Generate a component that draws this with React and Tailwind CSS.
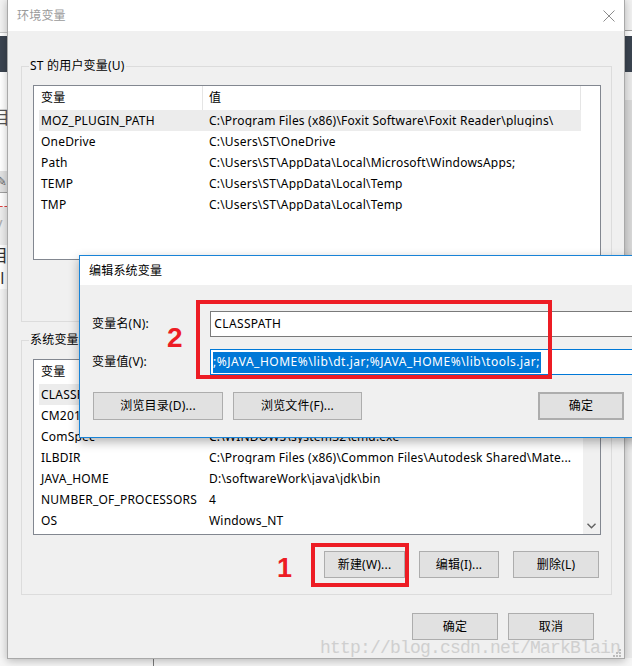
import React from "react";

const userVars = [
  ["MOZ_PLUGIN_PATH", "C:\\Program Files (x86)\\Foxit Software\\Foxit Reader\\plugins\\"],
  ["OneDrive", "C:\\Users\\ST\\OneDrive"],
  ["Path", "C:\\Users\\ST\\AppData\\Local\\Microsoft\\WindowsApps;"],
  ["TEMP", "C:\\Users\\ST\\AppData\\Local\\Temp"],
  ["TMP", "C:\\Users\\ST\\AppData\\Local\\Temp"],
];

const sysVars = [
  ["CLASSPATH", ".;%JAVA_HOME%\\lib\\dt.jar;%JAVA_HOME%\\lib\\tools.jar;"],
  ["CM2018DIR", "C:\\Program Files\\Common Files\\"],
  ["ComSpec", "C:\\WINDOWS\\system32\\cmd.exe"],
  ["ILBDIR", "C:\\Program Files (x86)\\Common Files\\Autodesk Shared\\Mate..."],
  ["JAVA_HOME", "D:\\softwareWork\\java\\jdk\\bin"],
  ["NUMBER_OF_PROCESSORS", "4"],
  ["OS", "Windows_NT"],
];

function Btn({ children, className = "" }) {
  return (
    <div
      className={
        "flex items-center justify-center h-[27px] bg-[#e1e1e1] border border-[#adadad] whitespace-nowrap " +
        className
      }
    >
      {children}
    </div>
  );
}

function ListView({ rows, className = "", scroll = false }) {
  return (
    <div className={"flex border border-[#828790] bg-white overflow-hidden " + className}>
      <div className="w-[547px] flex flex-col">
        <div className="flex h-[24px] shrink-0">
          <div className="w-[169px] pl-[7px] flex items-center border-r border-[#e5e5e5]">变量</div>
          <div className="flex-1 pl-[6px] flex items-center border-r border-[#e5e5e5]">值</div>
        </div>
        <div className="flex flex-col pl-[5px]">
          {rows.map(([k, v], i) => (
            <div
              key={k}
              className={
                "flex h-[21px] items-center whitespace-nowrap " + (i === 0 ? "bg-[#ececec]" : "")
              }
            >
              <div className="w-[168px] pl-[2px] overflow-hidden">{k}</div>
              <div className="flex-1 pl-[2px] overflow-hidden">{v}</div>
            </div>
          ))}
        </div>
      </div>
      {scroll ? (
        <div className="ml-auto w-[17px] bg-[#f0f0f0] flex flex-col justify-end items-center pb-[5px]">
          <svg width="9" height="6" viewBox="0 0 9 6">
            <path d="M0.5 0.8 L4.5 4.8 L8.5 0.8" stroke="#606060" strokeWidth="1.4" fill="none" />
          </svg>
        </div>
      ) : null}
    </div>
  );
}

function Backdrop() {
  return (
    <div className="absolute inset-0 flex flex-col">
      <div className="flex h-[658px]">
        <div className="w-[7px] flex flex-col overflow-hidden">
          <div className="h-[33px] bg-[#f2f2f2] border-b border-[#c8c8c8]" />
          <div className="h-[3px] bg-white" />
          <div className="h-[36px] bg-[#3b4450]" />
          <div className="h-[34px] bg-white" />
          <div className="h-[22px] bg-white text-[#555] text-[18px] leading-[22px] -ml-[8px]">目</div>
          <div className="h-[43px] bg-white" />
          <div className="h-[21px] bg-[#e2e2e2] text-[#666] text-[13px] leading-[21px] -ml-[4px]">✎</div>
          <div className="h-[1px] bg-[#a0a0a0]" />
          <div className="h-[14px] bg-white border-b border-dashed border-[#e04040]" />
          <div className="h-[38px] bg-[#ededed] text-[#b0b0b0] text-[18px] leading-[38px] -ml-[4px]">/</div>
          <div className="h-[22px] bg-white text-[#333] text-[17px] leading-[22px] -ml-[9px]">目</div>
          <div className="h-[22px] bg-white text-[#333] text-[16px] leading-[22px] -ml-[4px]">il</div>
          <div className="flex-1 bg-[#f4f4f4]" />
        </div>
        <div className="flex-1" />
        <div className="w-[8px] flex flex-col">
          <div className="h-[31px] bg-[#f0f0f0] border-b border-[#a0a0a0]" />
          <div className="h-[5px] bg-white" />
          <div className="h-[36px] bg-[#3b4450]" />
          <div className="h-[28px] bg-[#e9e9e9]" />
          <div className="h-[155px] bg-[#d8d8d8]" />
          <div className="flex-1 bg-[#ebebeb]" />
        </div>
      </div>
      <div className="flex-1 flex bg-[#f6f6f6]">
        <div className="w-[153px]" />
        <div className="w-[1px] bg-[#7a7a7a]" />
      </div>
    </div>
  );
}

export default function App() {
  return (
    <div className="relative w-[632px] h-[666px] overflow-hidden bg-[#f6f6f6] text-[12px] leading-none tracking-[0.2px] text-black font-['Noto_Sans','Noto_Sans_CJK_SC',sans-serif]">
      <Backdrop />

      {/* main dialog */}
      <div className="absolute left-[7px] top-[-1px] w-[618px] h-[660px] flex flex-col border border-[#a9a9a9] bg-[#f0f0f0] shadow-[0_2px_8px_rgba(0,0,0,0.25)]">
        <div className="h-[31px] shrink-0 bg-white flex items-center justify-between pl-[9px] pr-[9px] text-[#9a9a9a]">
          <span>环境变量</span>
          <svg width="12" height="12" viewBox="0 0 12 12">
            <path d="M0.5 0.5 L11.5 11.5 M11.5 0.5 L0.5 11.5" stroke="#8c8c8c" strokeWidth="1" />
          </svg>
        </div>
        <div className="flex-1 flex flex-col pl-[13px] pr-[12px]">
          <fieldset className="mt-[27px] border border-[#dcdcdc] pb-[61px]">
            <legend className="ml-[7px] px-[1px] leading-[16px]">ST 的用户变量(U)</legend>
            <ListView rows={userVars} className="ml-[11px] mt-[11px] w-[568px] h-[175px]" />
          </fieldset>

          <fieldset className="mt-[10px] border border-[#dcdcdc] pb-[16px]">
            <legend className="ml-[7px] px-[1px] leading-[16px]">系统变量(S)</legend>
            <ListView rows={sysVars} scroll className="ml-[11px] mt-[11px] w-[568px] h-[176px]" />
            <div className="flex mt-[16px] pl-[302px] gap-[14px]">
              <Btn className="w-[81px]">新建(W)...</Btn>
              <Btn className="w-[80px]">编辑(I)...</Btn>
              <Btn className="w-[86px]">删除(L)</Btn>
            </div>
          </fieldset>

          <div className="flex justify-end mt-[18px] pr-[18px] gap-[10px]">
            <Btn className="w-[86px]">确定</Btn>
            <Btn className="w-[86px]">取消</Btn>
          </div>
        </div>
      </div>

      {/* watermark */}
      <div className="absolute left-[320px] top-[637px] text-[18px] leading-[22px] tracking-[-0.8px] text-[#cfcfcf] font-['Liberation_Mono',monospace] whitespace-nowrap">
        http://blog.csdn.net/MarkBlain
      </div>

      {/* resize grip */}
      <svg className="absolute left-[612px] top-[649px]" width="10" height="9" viewBox="0 0 10 9">
        <rect x="7" y="0" width="2" height="2" fill="#bdbdbd" />
        <rect x="4" y="3" width="2" height="2" fill="#bdbdbd" />
        <rect x="7" y="3" width="2" height="2" fill="#bdbdbd" />
        <rect x="1" y="6" width="2" height="2" fill="#bdbdbd" />
        <rect x="4" y="6" width="2" height="2" fill="#bdbdbd" />
        <rect x="7" y="6" width="2" height="2" fill="#bdbdbd" />
      </svg>

      {/* edit dialog */}
      <div className="absolute left-[79px] top-[255px] w-[570px] h-[183px] flex flex-col border border-[#1883d7] bg-[#f0f0f0] shadow-[0_4px_10px_rgba(0,0,0,0.3)]">
        <div className="h-[29px] shrink-0 bg-white flex items-center pl-[9px]">编辑系统变量</div>
        <div className="flex flex-col pl-[12px]">
          <div className="flex items-center mt-[26px]">
            <div className="w-[119px]">变量名(N):</div>
            <div className="w-[440px] h-[26px] bg-white border border-[#7a7a7a] flex items-center pl-[3px] tracking-[0.35px]">
              CLASSPATH
            </div>
          </div>
          <div className="flex items-center mt-[12px]">
            <div className="w-[119px]">变量值(V):</div>
            <div className="w-[440px] h-[26px] bg-white border border-[#0078d7] flex items-center pl-[2px] overflow-hidden whitespace-nowrap">
              <span className="bg-[#0078d7] text-white h-[21px] flex items-center pr-[1px] tracking-[0.5px]">
                <span className="-ml-[4px]">.;%JAVA_HOME%\lib\dt.jar;%JAVA_HOME%\lib\tools.jar;</span>
              </span>
            </div>
          </div>
          <div className="flex mt-[17px] pl-[1px]">
            <Btn className="w-[130px] h-[28px]">浏览目录(D)...</Btn>
            <Btn className="w-[129px] h-[28px] ml-[10px]">浏览文件(F)...</Btn>
            <Btn className="w-[86px] h-[28px] ml-[176px] border-2 border-[#0078d7]">确定</Btn>
          </div>
        </div>
      </div>

      {/* annotations */}
      <div className="absolute left-[196px] top-[300px] w-[356px] h-[79px] border-4 border-[#ed1c24]" />
      <div className="absolute left-[167px] top-[322px] text-[28px] leading-[32px] font-bold text-[#ed1c24] font-['Liberation_Sans',sans-serif]">2</div>
      <div className="absolute left-[311px] top-[543px] w-[98px] h-[44px] border-4 border-[#ed1c24]" />
      <div className="absolute left-[277px] top-[553px] text-[27px] leading-[30px] font-bold text-[#ed1c24] font-['Liberation_Sans',sans-serif]">1</div>
    </div>
  );
}
